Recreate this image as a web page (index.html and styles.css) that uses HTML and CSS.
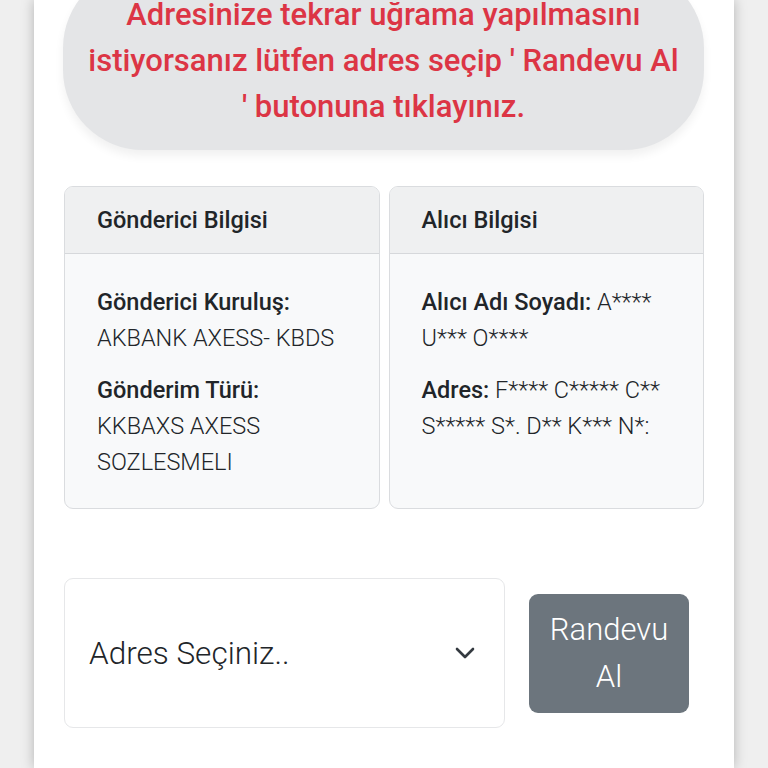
FILE: index.html
```html
<!DOCTYPE html>
<html lang="tr">
<head>
    <meta charset="UTF-8">
    <meta name="viewport" content="width=device-width, initial-scale=1.0">
    <title>Randevu</title>
    <link rel="stylesheet" href="styles.css">
</head>
<body>
    <div class="container">
        <div class="notice">
            <p>Adresinize tekrar uğrama yapılmasını istiyorsanız lütfen adres seçip ' Randevu Al ' butonuna tıklayınız.</p>
        </div>

        <div class="cards">
            <div class="card">
                <div class="card-header">Gönderici Bilgisi</div>
                <div class="card-body">
                    <p><b>Gönderici Kuruluş:</b><br>AKBANK AXESS- KBDS</p>
                    <p><b>Gönderim Türü:</b><br>KKBAXS AXESS SOZLESMELI</p>
                </div>
            </div>
            <div class="card">
                <div class="card-header">Alıcı Bilgisi</div>
                <div class="card-body">
                    <p><b>Alıcı Adı Soyadı:</b> A**** U*** O****</p>
                    <p><b>Adres:</b> F**** C***** C** S***** S*. D** K*** N*:</p>
                </div>
            </div>
        </div>

        <div class="appointment">
            <div class="address-select">
                <span class="placeholder">Adres Seçiniz..</span>
                <svg class="chevron" width="22" height="14" viewBox="0 0 22 14">
                    <path d="M3 3 L11 11 L19 3" fill="none" stroke="#343a40" stroke-width="2.6" stroke-linecap="round" stroke-linejoin="round"/>
                </svg>
            </div>
            <button type="button" class="appointment-button">Randevu<br>Al</button>
        </div>
    </div>
</body>
</html>
```

FILE: styles.css
```css
body {
    font-family: Roboto, "Liberation Sans", sans-serif;
    background-color: #efefef;
    margin: 0;
    height: 768px;
    overflow: hidden;
    color: #212529;
}
.container {
    display: flow-root;
    background-color: #fff;
    width: 700px;
    height: 100%;
    margin-left: 34px;
    padding: 0 30px;
    box-sizing: border-box;
    box-shadow: 0 0 12px rgba(0, 0, 0, 0.25);
}
.notice {
    background-color: #e4e5e7;
    border-radius: 80px;
    margin-top: -32px;
    margin-left: -1px;
    padding: 24px 22px 20px;
    box-shadow: 0 6px 10px rgba(0, 0, 0, 0.06);
}
.notice p {
    margin: 0;
    text-align: center;
    color: #dc3545;
    font-size: 31px;
    font-weight: 500;
    line-height: 46px;
}
.cards {
    display: flex;
    gap: 9px;
    margin-top: 36px;
}
.card {
    flex: 1;
    border: 1px solid #dadcdf;
    border-radius: 9px;
    background-color: #f8f9fa;
    overflow: hidden;
    height: 323px;
    box-sizing: border-box;
}
.card-header {
    background-color: #eff0f1;
    border-bottom: 1px solid #d6d8db;
    padding: 0 32px;
    height: 67px;
    line-height: 66px;
    box-sizing: border-box;
    font-size: 23.5px;
    font-weight: 500;
}
.card-body {
    padding: 30px 32px 0;
}
.card-body p {
    margin: 0 0 16px;
    font-size: 23.5px;
    font-weight: 300;
    line-height: 36px;
}
.card-body b {
    font-weight: 500;
}
.appointment {
    display: flex;
    align-items: center;
    gap: 24px;
    margin-top: 69px;
}
.address-select {
    width: 441px;
    height: 150px;
    border: 1px solid #e6e7e9;
    border-radius: 9px;
    box-sizing: border-box;
    display: flex;
    align-items: center;
    justify-content: space-between;
    padding: 0 28px 0 24px;
}
.placeholder {
    font-size: 31.5px;
    font-weight: 300;
}
.appointment-button {
    width: 160px;
    height: 119px;
    border: none;
    border-radius: 9px;
    background-color: #6c757d;
    color: #fff;
    font-family: inherit;
    font-size: 31px;
    font-weight: 300;
    line-height: 47px;
    padding: 0;
}
```
